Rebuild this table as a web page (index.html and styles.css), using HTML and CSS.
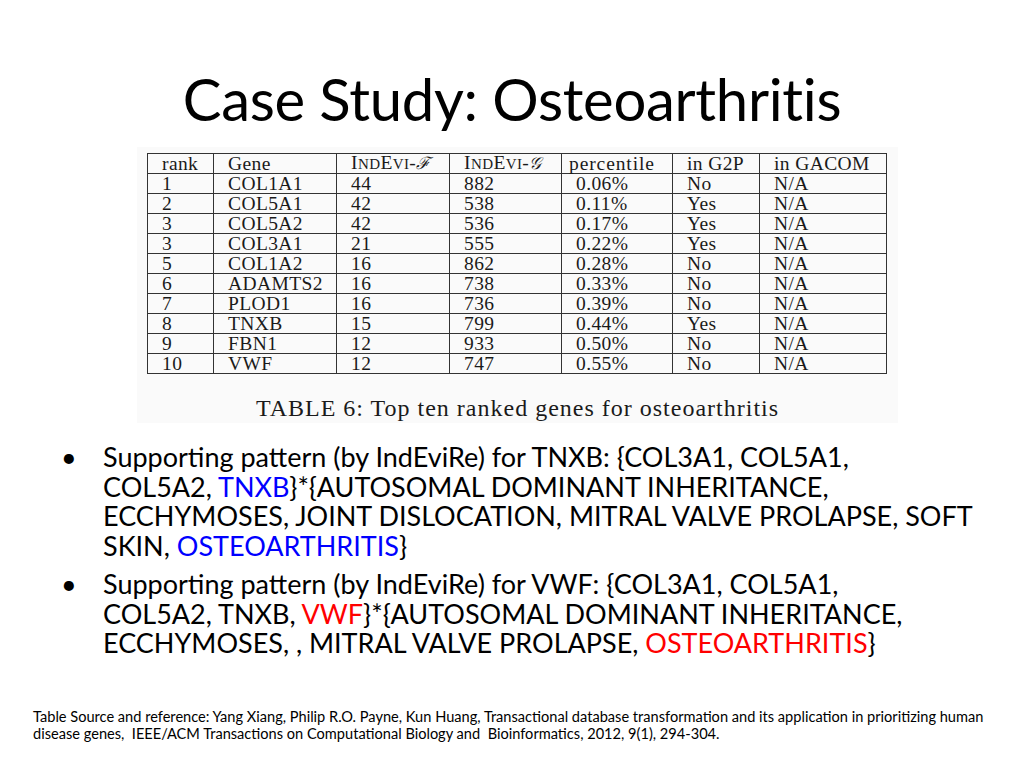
FILE: index.html
```html
<!DOCTYPE html>
<html>
<head>
<meta charset="utf-8">
<link rel="stylesheet" href="styles.css">
</head>
<body>
<div class="slide">
  <h1 class="title">Case Study: Osteoarthritis</h1>
  <div class="figure">
    <table class="genes">
      <tr class="head">
        <td>rank</td><td>Gene</td>
        <td>I<span class="sc">ND</span>E<span class="sc">VI</span>-<span class="cal">ℱ</span></td>
        <td>I<span class="sc">ND</span>E<span class="sc">VI</span>-<span class="cal">𝒢</span></td>
        <td class="pct">percentile</td><td>in G2P</td><td>in GACOM</td>
      </tr>
      <tr><td>1</td><td>COL1A1</td><td>44</td><td>882</td><td>0.06%</td><td>No</td><td>N/A</td></tr>
      <tr><td>2</td><td>COL5A1</td><td>42</td><td>538</td><td>0.11%</td><td>Yes</td><td>N/A</td></tr>
      <tr><td>3</td><td>COL5A2</td><td>42</td><td>536</td><td>0.17%</td><td>Yes</td><td>N/A</td></tr>
      <tr><td>3</td><td>COL3A1</td><td>21</td><td>555</td><td>0.22%</td><td>Yes</td><td>N/A</td></tr>
      <tr><td>5</td><td>COL1A2</td><td>16</td><td>862</td><td>0.28%</td><td>No</td><td>N/A</td></tr>
      <tr><td>6</td><td>ADAMTS2</td><td>16</td><td>738</td><td>0.33%</td><td>No</td><td>N/A</td></tr>
      <tr><td>7</td><td>PLOD1</td><td>16</td><td>736</td><td>0.39%</td><td>No</td><td>N/A</td></tr>
      <tr><td>8</td><td>TNXB</td><td>15</td><td>799</td><td>0.44%</td><td>Yes</td><td>N/A</td></tr>
      <tr><td>9</td><td>FBN1</td><td>12</td><td>933</td><td>0.50%</td><td>No</td><td>N/A</td></tr>
      <tr><td>10</td><td>VWF</td><td>12</td><td>747</td><td>0.55%</td><td>No</td><td>N/A</td></tr>
    </table>
    <p class="caption">TABLE 6: Top ten ranked genes for osteoarthritis</p>
  </div>
  <ul class="bullets">
    <li>Supporting pattern (by IndEviRe) for TNXB: {COL3A1, COL5A1,<br>COL5A2, <span class="blue">TNXB</span>}*{AUTOSOMAL DOMINANT INHERITANCE,<br>ECCHYMOSES, JOINT DISLOCATION, MITRAL VALVE PROLAPSE, SOFT<br>SKIN, <span class="blue">OSTEOARTHRITIS</span>}</li>
    <li>Supporting pattern (by IndEviRe) for VWF: {COL3A1, COL5A1,<br>COL5A2, TNXB, <span class="red">VWF</span>}*{AUTOSOMAL DOMINANT INHERITANCE,<br>ECCHYMOSES, , MITRAL VALVE PROLAPSE, <span class="red">OSTEOARTHRITIS</span>}</li>
  </ul>
  <p class="footnote">Table Source and reference: Yang Xiang, Philip R.O. Payne, Kun Huang, Transactional database transformation and its application in prioritizing human<br>disease genes,&nbsp; IEEE/ACM Transactions on Computational Biology and&nbsp; Bioinformatics, 2012, 9(1), 294-304.</p>
</div>
</body>
</html>
```

FILE: styles.css
```css
html, body {
  margin: 0;
  padding: 0;
  background: #ffffff;
}
.slide {
  width: 1024px;
  height: 768px;
  display: flex;
  flex-direction: column;
  font-family: "Lato", "Liberation Sans", sans-serif;
  color: #000;
  overflow: hidden;
}
.title {
  margin: 0;
  padding-top: 61px;
  height: 86px;
  font-weight: normal;
  font-size: 58px;
  line-height: 76px;
  text-align: center;
  letter-spacing: -0.3px;
}
.figure {
  margin-left: 137px;
  width: 761px;
  height: 276px;
  background: #fafafa;
  padding-top: 6px;
  box-sizing: border-box;
}
.genes {
  margin-left: 10px;
  border-collapse: collapse;
  font-family: "Liberation Serif", serif;
  font-size: 19.5px;
  letter-spacing: 0.4px;
  color: #1a1a1a;
}
.genes td {
  border: 1px solid #333;
  height: 20px;
  padding: 0 0 0 14px;
  line-height: 18px;
  box-sizing: border-box;
  vertical-align: middle;
}
.genes td:nth-child(1) { width: 66px; }
.genes td:nth-child(2) { width: 123px; }
.genes td:nth-child(3) { width: 113px; }
.genes td:nth-child(4) { width: 112px; }
.genes td:nth-child(5) { width: 111px; }
.genes td:nth-child(6) { width: 87px; }
.genes td:nth-child(7) { width: 127px; }
.genes tr.head td { height: 19px; }
.genes td.pct { padding-left: 7px; letter-spacing: 0.9px; }
.sc {
  font-size: 15px;
}
.cal {
  font-family: "DejaVu Serif", serif;
  font-style: italic;
  font-size: 17px;
}
.caption {
  margin: 20px 0 0 0;
  font-family: "Liberation Serif", serif;
  font-size: 24px;
  line-height: 28px;
  letter-spacing: 1px;
  text-align: center;
  color: #1a1a1a;
}
.bullets {
  margin: 19px 0 0 0;
  padding: 0 0 0 103px;
  list-style: none;
  font-size: 27px;
  line-height: 29.7px;
  white-space: nowrap;
}
.bullets li {
  position: relative;
  margin-bottom: 8px;
}
.bullets li::before {
  content: "•";
  position: absolute;
  left: -42px;
}
.blue { color: #0000ff; }
.red { color: #ff0000; }
.footnote {
  margin: auto 0 0 0;
  padding: 0 0 26px 33px;
  font-size: 14.6px;
  line-height: 17px;
  white-space: nowrap;
}
```
